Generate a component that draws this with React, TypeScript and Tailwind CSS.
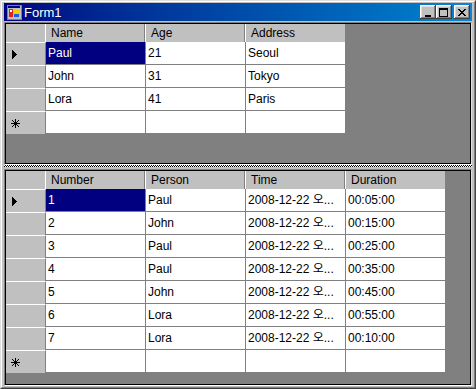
import React from 'react'

const FONT = "font-['Liberation_Sans','Noto_Sans_CJK_KR',Arial,sans-serif]"

type GridProps = {
    columns: string[]
    rows: string[][]
}

function CaptionButton({ children, className = '' }: { children: React.ReactNode; className?: string }) {
    return (
        <div
            className={`w-[16px] h-[14px] bg-[#c0c0c0] flex items-center justify-center shadow-[inset_-1px_-1px_#404040,inset_1px_1px_#ffffff,inset_-2px_-2px_#808080,inset_2px_2px_#dfdfdf] ${className}`}
        >
            {children}
        </div>
    )
}

function FormIcon() {
    return (
        <svg width="16" height="16" viewBox="0 0 16 16" shapeRendering="crispEdges">
            <rect x="1" y="1" width="14" height="14" fill="#c0c0c0" stroke="#808080" />
            <rect x="2" y="2" width="12" height="2" fill="#000080" />
            <rect x="3" y="5" width="4" height="8" fill="#e02020" />
            <rect x="8" y="5" width="5" height="4" fill="#f0d000" />
            <rect x="8" y="10" width="5" height="3" fill="#2060e0" />
            <rect x="4" y="6" width="2" height="2" fill="#ffffff" />
        </svg>
    )
}

function RowArrow() {
    return (
        <svg width="5" height="9" viewBox="0 0 5 9" shapeRendering="crispEdges">
            <polygon points="0,0 4.5,4.5 0,9" fill="#000" />
        </svg>
    )
}

function NewRowStar() {
    return (
        <svg width="9" height="9" viewBox="0 0 9 9" shapeRendering="crispEdges">
            <rect x="4" y="0" width="1" height="9" fill="#000" />
            <rect x="0" y="4" width="9" height="1" fill="#000" />
            <rect x="1" y="1" width="1" height="1" fill="#000" />
            <rect x="2" y="2" width="1" height="1" fill="#000" />
            <rect x="3" y="3" width="3" height="3" fill="#000" />
            <rect x="6" y="6" width="1" height="1" fill="#000" />
            <rect x="7" y="7" width="1" height="1" fill="#000" />
            <rect x="7" y="1" width="1" height="1" fill="#000" />
            <rect x="6" y="2" width="1" height="1" fill="#000" />
            <rect x="2" y="6" width="1" height="1" fill="#000" />
            <rect x="1" y="7" width="1" height="1" fill="#000" />
        </svg>
    )
}

function DataGrid({ columns, rows }: GridProps) {
    return (
        <div className="flex flex-col">
            {/* header */}
            <div className="flex h-[18px]">
                <div className="w-[39px] h-full bg-[#c0c0c0]" />
                {columns.map((c, i) => (
                    <div
                        key={c}
                        className={`${i === columns.length - 1 ? 'w-[101px]' : 'w-[100px]'} h-full bg-[#c0c0c0] border-l border-white border-r border-r-[#808080] pl-[5px] flex items-center text-[12px] text-black`}
                    >
                        {c}
                    </div>
                ))}
            </div>
            {rows.map((r, ri) => (
                <div key={ri} className="flex h-[23px]">
                    <div className="w-[40px] h-full bg-[#c0c0c0] border-t border-white border-r border-r-[#808080] flex items-center pl-[6px]">
                        {ri === 0 && <RowArrow />}
                    </div>
                    {r.map((v, ci) => (
                        <div
                            key={ci}
                            className="w-[100px] h-full bg-white border-r border-b border-[#808080] flex"
                        >
                            <div
                                className={`flex-1 flex items-center pl-[2px] text-[12px] whitespace-nowrap overflow-hidden ${
                                    ri === 0 && ci === 0 ? 'bg-[#000080] text-white' : 'text-black'
                                }`}
                            >
                                {v}
                            </div>
                        </div>
                    ))}
                </div>
            ))}
            {/* new row */}
            <div className="flex h-[23px]">
                <div className="w-[40px] h-full bg-[#c0c0c0] border-t border-white border-r border-r-[#808080] flex items-center pl-[5px]">
                    <NewRowStar />
                </div>
                {columns.map((c) => (
                    <div key={c} className="w-[100px] h-full bg-white border-r border-b border-[#808080]" />
                ))}
            </div>
        </div>
    )
}

const people = [
    ['Paul', '21', 'Seoul'],
    ['John', '31', 'Tokyo'],
    ['Lora', '41', 'Paris'],
]

const calls = [
    ['1', 'Paul', '2008-12-22 오...', '00:05:00'],
    ['2', 'John', '2008-12-22 오...', '00:15:00'],
    ['3', 'Paul', '2008-12-22 오...', '00:25:00'],
    ['4', 'Paul', '2008-12-22 오...', '00:35:00'],
    ['5', 'John', '2008-12-22 오...', '00:45:00'],
    ['6', 'Lora', '2008-12-22 오...', '00:55:00'],
    ['7', 'Lora', '2008-12-22 오...', '00:10:00'],
]

export default function App() {
    return (
        <div className={`w-[476px] h-[389px] ${FONT} bg-[#c0c0c0]`}>
            <div className="w-full h-full border border-[#dfdfdf] border-r-[#404040] border-b-[#404040]">
                <div className="w-full h-full border border-white border-r-[#808080] border-b-[#808080] p-[2px] pt-[1px] pb-[1px] flex flex-col">
                    {/* title bar */}
                    <div className="h-[18px] bg-linear-to-r from-[#000080] to-[#1084d0] flex items-center">
                        <div className="ml-[2px] w-[16px] h-[16px]">
                            <FormIcon />
                        </div>
                        <span className="ml-[2px] text-white text-[13px] leading-none">Form1</span>
                        <div className="ml-auto mr-[2px] flex items-center">
                            <CaptionButton>
                                <svg width="8" height="7" viewBox="0 0 8 7" shapeRendering="crispEdges" className="mt-[3px] mr-[1px]">
                                    <rect x="1" y="5" width="6" height="2" fill="#000" />
                                </svg>
                            </CaptionButton>
                            <CaptionButton>
                                <svg width="9" height="9" viewBox="0 0 9 9" shapeRendering="crispEdges" className="mr-[1px]">
                                    <rect x="0.5" y="0.5" width="8" height="8" fill="none" stroke="#000" />
                                    <rect x="0" y="1" width="9" height="1" fill="#000" />
                                </svg>
                            </CaptionButton>
                            <CaptionButton className="ml-[2px]">
                                <svg width="8" height="7" viewBox="0 0 8 7" shapeRendering="crispEdges" className="mr-[1px]">
                                    <path d="M0 0h2v1h-2zM6 0h2v1h-2zM1 1h2v1h-2zM5 1h2v1h-2zM2 2h4v1h-4zM3 3h2v1h-2zM2 4h4v1h-4zM1 5h2v1h-2zM5 5h2v1h-2zM0 6h2v1h-2zM6 6h2v1h-2z" fill="#000" />
                                </svg>
                            </CaptionButton>
                        </div>
                    </div>

                    {/* top panel */}
                    <div className="mt-[1px] h-[143px] border border-[#808080] border-r-[#dfdfdf] border-b-[#ffffff]">
                        <div className="w-full h-full border border-black bg-[#808080]">
                            <DataGrid columns={['Name', 'Age', 'Address']} rows={people} />
                        </div>
                    </div>

                    {/* splitter */}
                    <div className="h-[4px]">
                        <div className="h-[2px] bg-[conic-gradient(#000_25%,#ffffff_0_50%,#000_0_75%,#ffffff_0)] bg-[length:2px_2px]" />
                    </div>

                    {/* bottom panel */}
                    <div className="flex-1 border border-[#808080] border-r-[#dfdfdf] border-b-[#ffffff]">
                        <div className="w-full h-full border border-black bg-[#808080]">
                            <DataGrid columns={['Number', 'Person', 'Time', 'Duration']} rows={calls} />
                        </div>
                    </div>
                </div>
            </div>
        </div>
    )
}
